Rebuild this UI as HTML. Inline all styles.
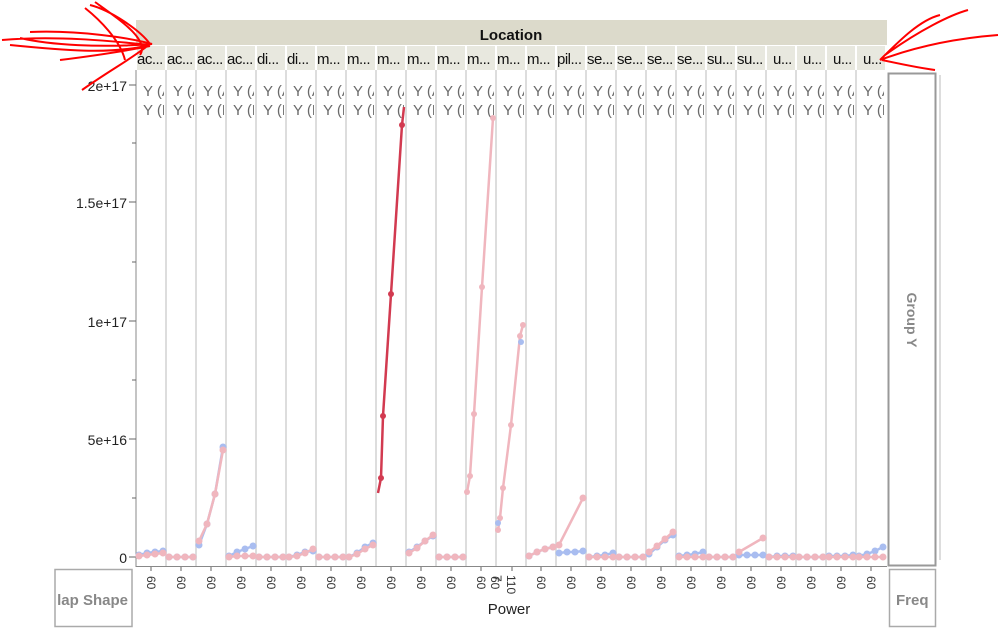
<!DOCTYPE html>
<html><head><meta charset="utf-8"><style>
body{margin:0;width:999px;height:628px;overflow:hidden;background:#fff;font-family:"Liberation Sans",sans-serif;position:relative}
.a{position:absolute}
</style></head><body>
<div class="a" style="left:380px;top:-12px;width:210px;height:26px;overflow:hidden;text-align:center;font-weight:bold;font-size:18px;color:#222;clip-path:inset(17px 0 0 0)">Max RS+ vs. Power</div>
<svg class="a" style="left:0;top:0" width="999" height="628" id="s" font-family="Liberation Sans, sans-serif">
<rect x="136" y="20" width="751" height="25" fill="#dcdacb"/>
<text x="511" y="40" font-size="15" font-weight="bold" text-anchor="middle" fill="#111">Location</text>
<g id="hdr"></g>
<line x1="136" y1="70" x2="136" y2="567" stroke="#888"/>
<line x1="136" y1="566.5" x2="887" y2="566.5" stroke="#888"/>
<g id="cols"></g>
<g font-size="14" fill="#222" text-anchor="end">
<text x="127" y="91">2e+17</text><text x="127" y="208">1.5e+17</text><text x="127" y="327">1e+17</text><text x="127" y="445">5e+16</text><text x="127" y="563">0</text>
</g>
<g stroke="#666"><line x1="129" y1="85" x2="136" y2="85"/><line x1="129" y1="202" x2="136" y2="202"/><line x1="129" y1="321" x2="136" y2="321"/><line x1="129" y1="439" x2="136" y2="439"/><line x1="129" y1="557" x2="136" y2="557"/><line x1="132" y1="143" x2="136" y2="143"/><line x1="132" y1="262" x2="136" y2="262"/><line x1="132" y1="380" x2="136" y2="380"/><line x1="132" y1="498" x2="136" y2="498"/></g>
<g id="data"></g>
<rect x="888.5" y="73.5" width="47" height="492" fill="#fff" stroke="#999" stroke-width="2"/>
<line x1="940" y1="75" x2="940" y2="560" stroke="#ddd" stroke-width="2"/>
<text transform="translate(907,320) rotate(90)" font-size="14" font-weight="bold" fill="#888" text-anchor="middle">Group Y</text>
<rect x="55" y="569.5" width="77" height="57" fill="#fff" stroke="#aaa" stroke-width="1.5"/>
<text x="128" y="605" font-size="15" font-weight="bold" fill="#888" text-anchor="end">lap Shape</text>
<rect x="889.5" y="569.5" width="46" height="57" fill="#fff" stroke="#aaa" stroke-width="1.5"/>
<text x="896" y="605" font-size="15" font-weight="bold" fill="#888">Freq</text>
<text x="509" y="614" font-size="15" fill="#222" text-anchor="middle">Power</text>
<g id="ticks" font-size="12" fill="#333"></g>
<g fill="none" stroke="#f00" stroke-width="2">
<path d="M2,40 C60,35 120,42 150,45 C110,55 60,50 10,45 M30,32 C80,30 130,38 152,44 C100,48 50,45 20,38 M90,5 C110,10 140,30 150,44 C130,60 110,70 82,90 M95,2 C120,20 150,40 140,55 M60,60 C100,55 130,50 150,46 M85,8 C100,20 120,40 125,60"/>
<path d="M880,60 C900,40 920,20 940,15 M885,55 C920,30 950,15 968,10 M880,60 C920,45 960,38 998,35 M882,60 C905,65 920,68 935,70"/>
</g>
</svg>
<script>
const labs=["ac...","ac...","ac...","ac...","di...","di...","m...","m...","m...","m...","m...","m...","m...","m...","pil...","se...","se...","se...","se...","su...","su...","u...","u...","u...","u..."];
let h="",c="",t="",d="";
for(let i=0;i<25;i++){const x=136+30*i;
h+=`<rect x="${x+1}" y="46" width="28" height="24" fill="#e8e8df"/><svg x="${x}" y="46" width="30" height="24"><text x="${i>20?7:1}" y="18" font-size="15" fill="#111" letter-spacing="-0.5">${labs[i]}</text></svg>`;
if(i>0)c+=`<line x1="${x}" y1="70" x2="${x}" y2="566" stroke="#ddd" stroke-width="2"/>`;
c+=`<svg x="${x}" y="75" width="28" height="45"><text x="7" y="21" font-size="15" fill="#6a6a6a">Y (A</text><text x="7" y="40" font-size="15" fill="#6a6a6a">Y (M</text></svg>`;
if(i!=12)t+=`<line x1="${x+15}" y1="567" x2="${x+15}" y2="571" stroke="#666"/><text transform="translate(${x+11},576) rotate(90)">60</text>`;
}
t+=`<line x1="512" y1="567" x2="512" y2="571" stroke="#666"/><text transform="translate(493,575) rotate(90)">7</text><text transform="translate(507,575) rotate(90)">110</text><text transform="translate(491,576) rotate(90)">60</text>`;
const F=[557,557,557,557];
const B={0:[555,553,552,551],1:F,2:[545,524,494,447],3:[556,552,549,546],4:F,5:[557,555,552,551],6:F,7:[557,553,547,543],9:[552,547,541,536],10:F,13:[556,552,549,547],14:[553,552,552,551],15:[557,556,555,553],16:F,17:[554,547,540,535],18:[556,555,554,552],19:F,20:[555,555,555,555],21:[557,556,556,556],22:F,23:[556,556,556,555],24:[556,554,551,547]};
const P={0:[556,555,554,553],1:F,2:[541,524,494,450],3:[557,556,556,556],4:F,5:[557,556,553,549],6:F,7:[557,554,549,545],9:[553,548,541,535],10:F,13:[556,552,549,547],14:[545,498],15:F,16:F,17:[552,546,539,532],18:F,19:F,20:[552,538],21:F,22:F,23:F,24:F};
function ser(i,ys,col){const x=136+30*i+3;const n=ys.length;let pts=ys.map((y,k)=>[x+(n==2?k*24:k*8),y]);
d+=`<polyline points="${pts.map(p=>p.join(',')).join(' ')}" fill="none" stroke="${col}" stroke-width="2.5"/>`;
pts.forEach(p=>d+=`<circle cx="${p[0]}" cy="${p[1]}" r="3.5" fill="${col}"/>`);}
for(const k in B)ser(+k,B[k],"#a9bdf0");
for(const k in P)ser(+k,P[k],"#f0b6be");
function line(pts,col,w,dots){d+=`<polyline points="${pts.map(p=>p.join(',')).join(' ')}" fill="none" stroke="${col}" stroke-width="${w}"/>`;(dots||pts).forEach(p=>d+=`<circle cx="${p[0]}" cy="${p[1]}" r="3" fill="${col}"/>`);}
line([[467,492],[470,476],[474,414],[482,287],[493,118]],"#f0b6be",2.5);
line([[498,530],[500,518],[503,488],[511,425],[520,336],[523,325]],"#f0b6be",2.5);
d+=`<circle cx="521" cy="342" r="3" fill="#a9bdf0"/><circle cx="498" cy="523" r="3" fill="#a9bdf0"/>`;
line([[378,493],[381,478],[383,416],[391,294],[402,125],[404,107]],"#d23a50",2.5,[[381,478],[383,416],[391,294],[402,125]]);
document.getElementById("hdr").innerHTML=h;document.getElementById("cols").innerHTML=c;document.getElementById("ticks").innerHTML=t;document.getElementById("data").innerHTML=d;
</script>
</body></html>
